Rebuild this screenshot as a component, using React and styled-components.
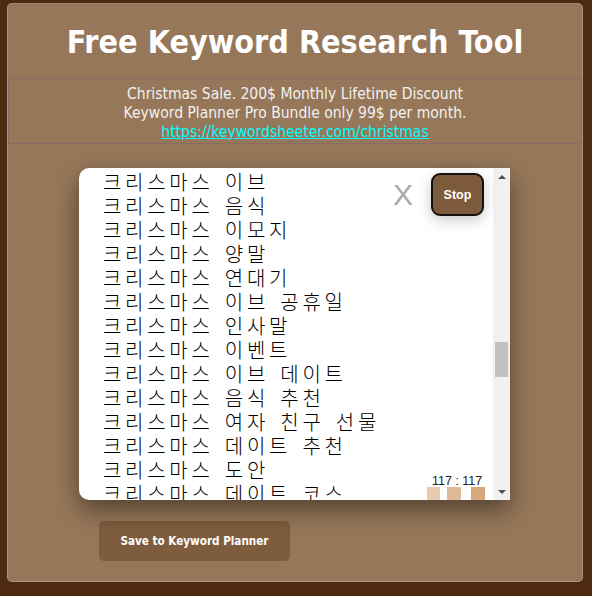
import React from "react";
import styled, { createGlobalStyle } from "styled-components";

const GlobalStyle = createGlobalStyle`
  html, body { margin: 0; padding: 0; }
  body {
    background: #4d2a10;
    width: 592px;
    height: 596px;
    overflow: hidden;
  }
`;

const Page = styled.div`
  padding: 3px 9px 14px 7px;
`;

const Card = styled.div`
  box-sizing: border-box;
  height: 579px;
  background: #967759;
  border: 1px solid #b39478;
  border-top-color: #a2846a;
  border-radius: 5px;
  display: flex;
  flex-direction: column;
  font-family: "DejaVu Sans Condensed", "DejaVu Sans", sans-serif;
  font-stretch: condensed;
`;

const Title = styled.h1`
  box-sizing: border-box;
  margin: 0;
  height: 74px;
  padding-top: 18px;
  text-align: center;
  color: #ffffff;
  font-size: 32px;
  font-weight: bold;
  line-height: 40px;
`;

const Promo = styled.div`
  border: 1px solid #8a6a66;
  padding: 6px 0 1px;
  text-align: center;
  color: #f1f1f1;
  font-size: 15.5px;
  line-height: 19px;
`;

const PromoLink = styled.a`
  color: #00ffff;
  text-decoration: underline;
`;

const ToolWrap = styled.div`
  position: relative;
  margin: 24px 0 0 71px;
  width: 431px;
  height: 332px;
  display: flex;
  background: #ffffff;
  border-radius: 10px 0 0 10px;
  box-shadow: 0 10px 24px rgba(0, 0, 0, 0.45);
`;

const List = styled.div`
  flex: 1;
  overflow: hidden;
  padding-left: 24px;
  border-radius: 10px 0 0 10px;
  font-family: "Noto Sans CJK KR", sans-serif;
  font-weight: 300;
  font-size: 20px;
  line-height: 24px;
  letter-spacing: 3.7px;
  word-spacing: 3.2px;
  color: #000000;
`;

const Rows = styled.div`
  margin-top: 2px;
`;

const Row = styled.div`
  white-space: nowrap;
  height: 24px;
`;

const Scrollbar = styled.div`
  width: 17px;
  background: #f1f1f1;
  display: flex;
  flex-direction: column;
`;

const ArrowButton = styled.div`
  height: 17px;
  display: flex;
  align-items: center;
  justify-content: center;
  &::before {
    content: "";
    border-left: 4px solid transparent;
    border-right: 4px solid transparent;
    ${(p) =>
      p.$down
        ? "border-top: 4px solid #505050;"
        : "border-bottom: 4px solid #505050;"}
  }
`;

const Track = styled.div`
  flex: 1;
`;

const Thumb = styled.div`
  margin: 157px 2px 0;
  height: 35px;
  background: #c1c1c1;
`;

const CloseX = styled.div`
  position: absolute;
  left: 314px;
  top: 12px;
  font-family: "Liberation Sans", Arial, sans-serif;
  font-size: 30px;
  line-height: 30px;
  color: #aaaaaa;
`;

const StopButton = styled.button`
  position: absolute;
  left: 352px;
  top: 5px;
  box-sizing: border-box;
  width: 53px;
  height: 43px;
  padding: 0;
  background: #7d5a3b;
  border: 2px solid #111111;
  border-radius: 9px;
  color: #ffffff;
  font-family: "Liberation Sans", Arial, sans-serif;
  font-weight: bold;
  font-size: 12.5px;
  box-shadow: 0 4px 14px rgba(0, 0, 0, 0.22);
`;

const Counter = styled.div`
  position: absolute;
  left: 353px;
  top: 307px;
  font-family: "Liberation Sans", Arial, sans-serif;
  font-size: 12.5px;
  line-height: 12px;
  color: #222222;
`;

const Swatches = styled.div`
  position: absolute;
  left: 348px;
  bottom: 0;
  display: flex;
  align-items: flex-end;
`;

const Swatch = styled.div`
  width: ${(p) => p.$w}px;
  height: 13px;
  margin-left: ${(p) => p.$gap}px;
  background: ${(p) => p.$color};
`;

const SaveButton = styled.button`
  margin: 21px 0 0 91px;
  width: 191px;
  height: 40px;
  border: none;
  border-radius: 5px;
  background: #7e5d3e;
  color: #ffffff;
  font-family: "DejaVu Sans Condensed", "DejaVu Sans", sans-serif;
  font-stretch: condensed;
  font-weight: bold;
  font-size: 11.6px;
  padding: 0;
`;

const keywords = [
  "크리스마스 이브",
  "크리스마스 음식",
  "크리스마스 이모지",
  "크리스마스 양말",
  "크리스마스 연대기",
  "크리스마스 이브 공휴일",
  "크리스마스 인사말",
  "크리스마스 이벤트",
  "크리스마스 이브 데이트",
  "크리스마스 음식 추천",
  "크리스마스 여자 친구 선물",
  "크리스마스 데이트 추천",
  "크리스마스 도안",
  "크리스마스 데이트 코스",
];

const swatches = [
  { w: 13, gap: 0, color: "#e8ccb0" },
  { w: 14, gap: 7, color: "#dfba98" },
  { w: 14, gap: 10, color: "#d7a87b" },
];

export default function App() {
  return (
    <>
      <GlobalStyle />
      <Page>
        <Card>
          <Title>Free Keyword Research Tool</Title>
          <Promo>
            Christmas Sale. 200$ Monthly Lifetime Discount
            <br />
            Keyword Planner Pro Bundle only 99$ per month.
            <br />
            <PromoLink href="#">https://keywordsheeter.com/christmas</PromoLink>
          </Promo>
          <ToolWrap>
            <List>
              <Rows>
                {keywords.map((k) => (
                  <Row key={k}>{k}</Row>
                ))}
              </Rows>
            </List>
            <Scrollbar>
              <ArrowButton />
              <Track>
                <Thumb />
              </Track>
              <ArrowButton $down />
            </Scrollbar>
            <CloseX>X</CloseX>
            <StopButton>Stop</StopButton>
            <Counter>117 : 117</Counter>
            <Swatches>
              {swatches.map((s) => (
                <Swatch key={s.color} $w={s.w} $gap={s.gap} $color={s.color} />
              ))}
            </Swatches>
          </ToolWrap>
          <SaveButton>Save to Keyword Planner</SaveButton>
        </Card>
      </Page>
    </>
  );
}
